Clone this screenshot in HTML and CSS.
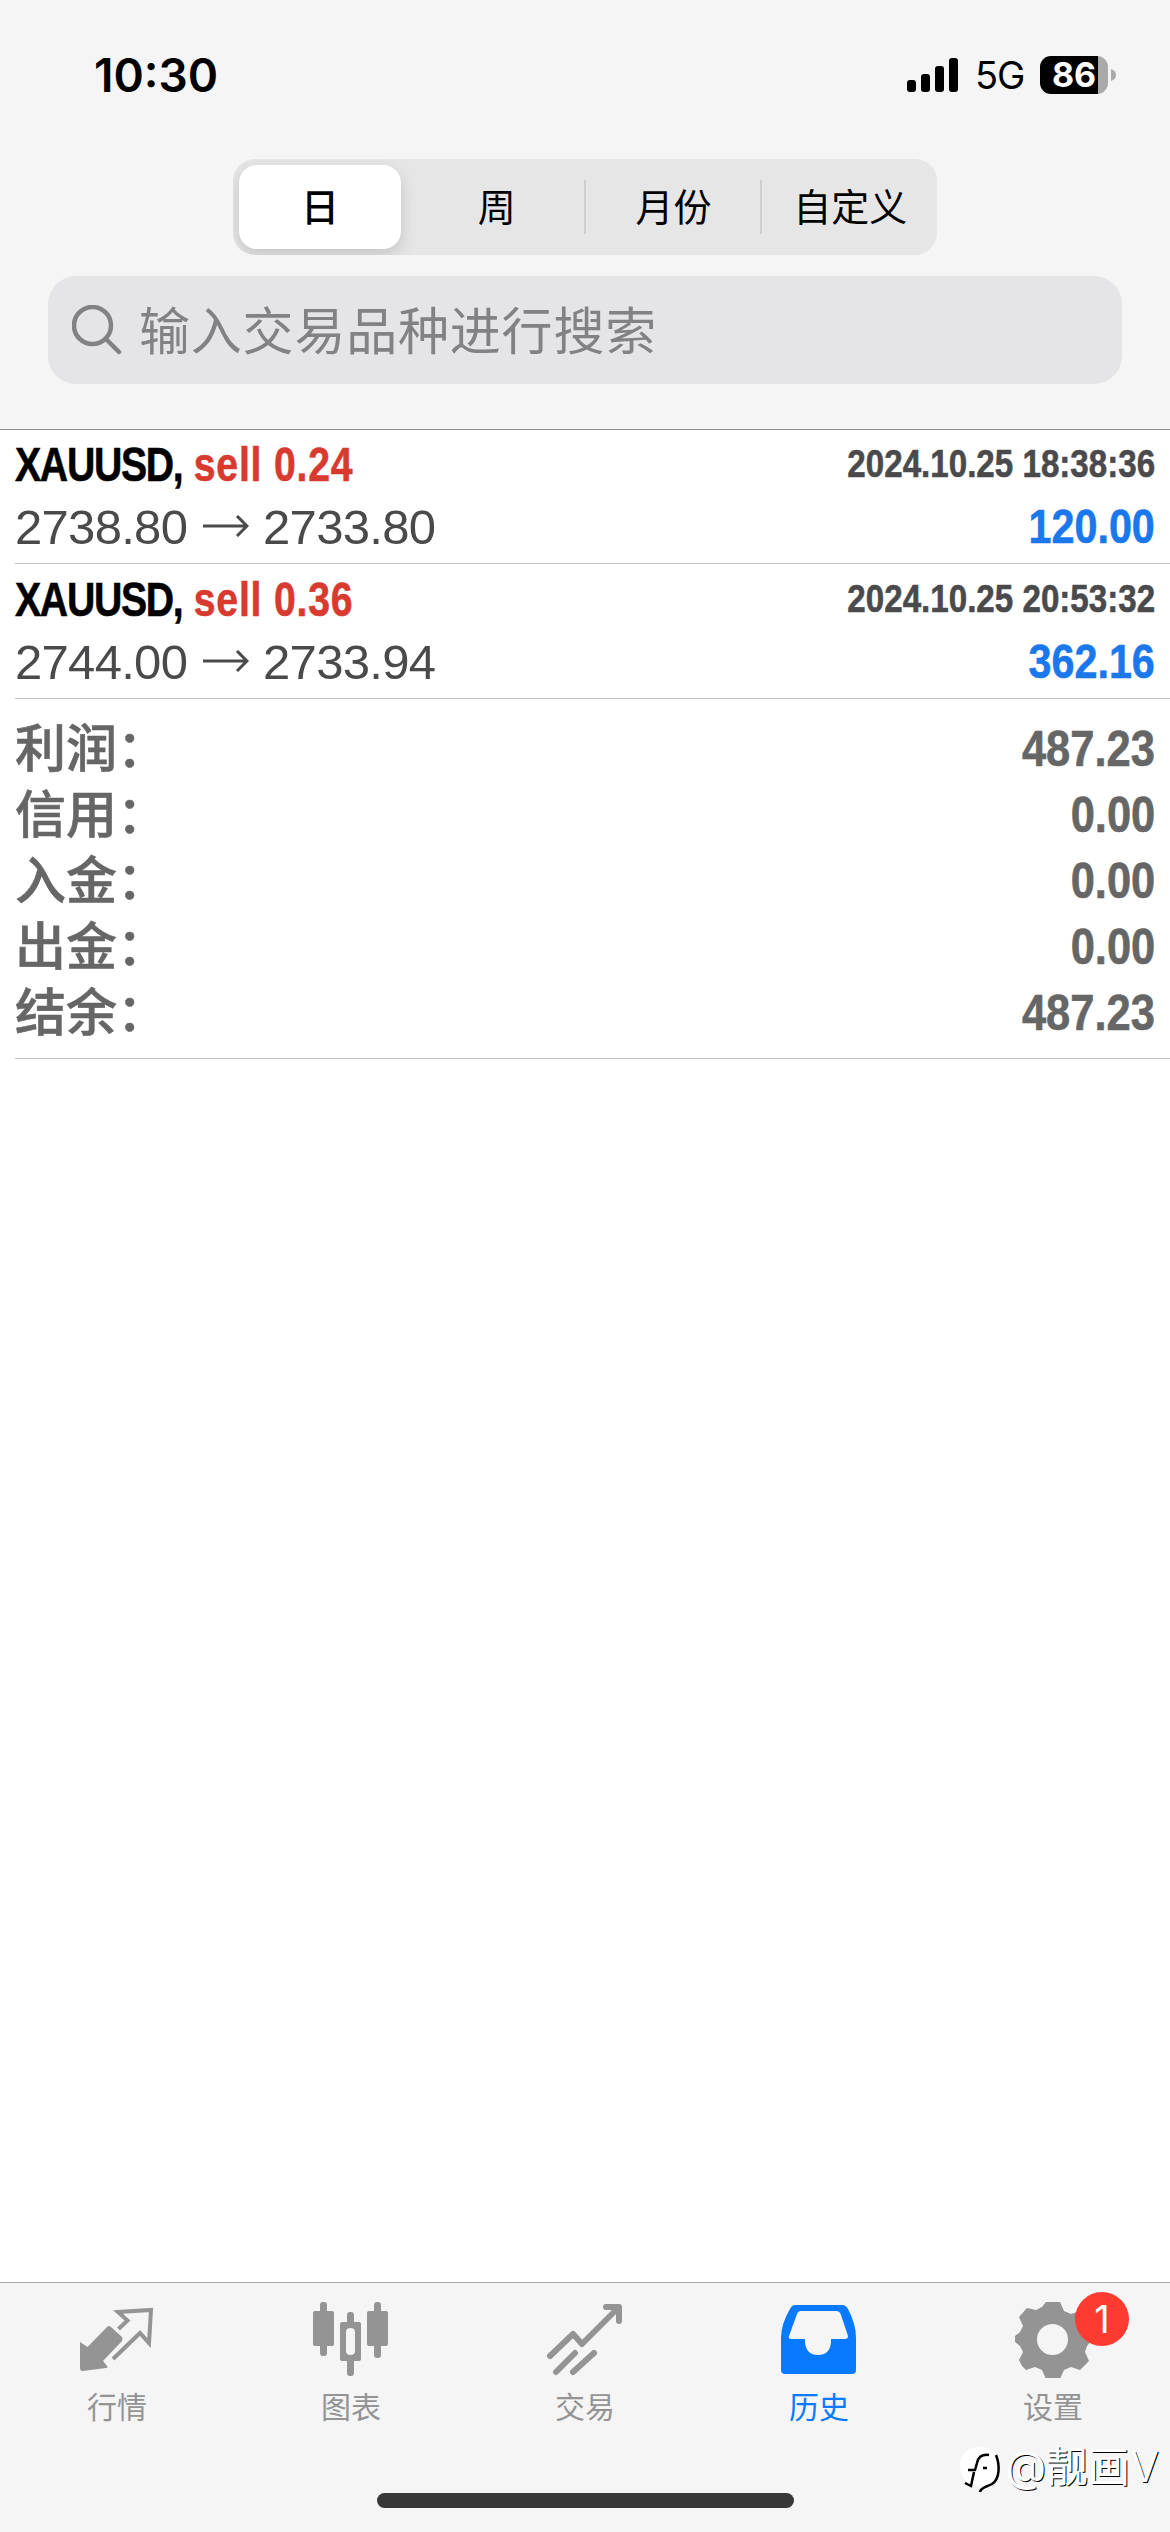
FILE: index.html
```
<!DOCTYPE html>
<html lang="zh-CN">
<head>
    <meta charset="UTF-8">
    <meta name="viewport" content="width=device-width, initial-scale=1.0">
    <title>历史</title>
    <link rel="stylesheet" href="styles.css">
</head>
<body>
    <!-- Header -->
    <header class="header">
        <div class="status-bar">
            <span class="time">10:30</span>
            <div class="status-icons">
                <svg class="signal" viewBox="0 0 51 34">
                    <rect x="0" y="22" width="9" height="12" rx="3"/>
                    <rect x="14" y="16" width="9" height="18" rx="3"/>
                    <rect x="28" y="8" width="9" height="26" rx="3"/>
                    <rect x="42" y="0" width="9" height="34" rx="3"/>
                </svg>
                <span class="network">5G</span>
                <div class="battery"><span>86</span></div>
                <svg class="battery-tip" viewBox="0 0 5 12">
                    <path d="M0 0c3 1 5 3 5 6s-2 5-5 6z"/>
                </svg>
            </div>
        </div>
        <div class="segments">
            <a href="#" class="segment active">日</a>
            <a href="#" class="segment">周</a>
            <a href="#" class="segment divided">月份</a>
            <a href="#" class="segment divided">自定义</a>
        </div>
        <div class="search">
            <svg viewBox="0 0 50 50">
                <circle cx="20.500" cy="20.500" r="18.500"/>
                <path d="M34 34l13 13"/>
            </svg>
            <span>输入交易品种进行搜索</span>
        </div>
    </header>

    <!-- History -->
    <main class="history">
        <div class="deal">
            <div class="deal-row">
                <span class="symbol">XAUUSD, <em>sell 0.24</em></span>
                <span class="date">2024.10.25 18:38:36</span>
            </div>
            <div class="deal-row">
                <span class="prices">2738.80 <svg viewBox="0 0 46 22"><path d="M0 11h44M34 1l10 10-10 10"/></svg> 2733.80</span>
                <span class="profit">120.00</span>
            </div>
        </div>
        <div class="deal">
            <div class="deal-row">
                <span class="symbol">XAUUSD, <em>sell 0.36</em></span>
                <span class="date">2024.10.25 20:53:32</span>
            </div>
            <div class="deal-row">
                <span class="prices">2744.00 <svg viewBox="0 0 46 22"><path d="M0 11h44M34 1l10 10-10 10"/></svg> 2733.94</span>
                <span class="profit">362.16</span>
            </div>
        </div>
        <div class="summary">
            <div class="summary-row"><span>利润：</span><b>487.23</b></div>
            <div class="summary-row"><span>信用：</span><b>0.00</b></div>
            <div class="summary-row"><span>入金：</span><b>0.00</b></div>
            <div class="summary-row"><span>出金：</span><b>0.00</b></div>
            <div class="summary-row"><span>结余：</span><b>487.23</b></div>
        </div>
    </main>

    <!-- Tab Bar -->
    <nav class="tab-bar">
        <a href="#" class="tab">
            <svg viewBox="0 0 76 76">
                <path d="M1 40l7.500 5L28 25q2-2 4 0l11 10q1 2 0 4L24 59l4 5q1 2-1 2L4 69q-3 0-3-3z"/>
                <path class="line" d="M39.500 27l9-8.500-9.500-8.500 33-2-2 33-9-10-27 26"/>
            </svg>
            <span>行情</span>
        </a>
        <a href="#" class="tab">
            <svg viewBox="0 0 76 76">
                <rect x="7" y="0" width="7" height="54" rx="3"/>
                <rect x="0" y="9" width="21" height="35" rx="2"/>
                <rect x="61" y="0" width="7" height="56" rx="3"/>
                <rect x="54" y="9" width="21" height="35" rx="2"/>
                <rect x="34" y="10" width="7" height="16" rx="3"/>
                <rect x="34" y="54" width="7" height="20" rx="3"/>
                <path fill-rule="evenodd" d="M29 20h17q2 0 2 2v35q0 2-2 2H29q-2 0-2-2V22q0-2 2-2zM37.500 26q-4.500 0-4.500 4v19q0 4 4.500 4t4.500-4V30q0-4-4.500-4z"/>
            </svg>
            <span>图表</span>
        </a>
        <a href="#" class="tab">
            <svg viewBox="0 0 76 76">
                <path class="thick" d="M3 54L26 32l9 10L70 7M59 5h13v14M9 70l19-19M26 70l21-19"/>
            </svg>
            <span>交易</span>
        </a>
        <a href="#" class="tab active">
            <svg viewBox="0 0 76 76">
                <path fill-rule="evenodd" d="M14 3h47q4 0 6 4 8 15 8 29v32q0 4-4 4H4q-4 0-4-4V36Q0 22 9 7q2-4 5-4zM20 9q-3 0-4 3L8 34q-1 3 2 3h14v3q1 13 13 13t13-13v-3h14q3 0 3-3L60 13q-1-4-5-4z"/>
            </svg>
            <span>历史</span>
        </a>
        <a href="#" class="tab">
            <svg viewBox="0 0 76 76">
                <path fill-rule="evenodd" d="M31 0h14l4 9 7 3 9-3 9 10-4 9 2 6 4 3v2l-4 5-2 6 4 9-9 9-9-3-7 3-4 9H31l-4-9-7-3-9 3-4-4-3-6 4-8-3-6-5-4v-6l5-4 3-6-4-9 8-9 9 2 6-3zM37.500 22a15.500 15.500 0 1 0 0 31 15.500 15.500 0 1 0 0-31z"/>
            </svg>
            <span>设置</span>
            <i class="badge">1</i>
        </a>
    </nav>
    <div class="home-indicator"></div>

    <div class="watermark">
        <svg viewBox="0 0 42 48">
            <path class="bubble" d="M20 1C9 1 1 9 1 19c0 9 4 16 11 20l9 1 1 6c11-4 18-12 18-25C40 8 32 1 20 1z"/>
            <path class="mark" d="M37 9c4 10 4 24-4 29-5 3-11 3-12 8M30 9c-8-1-11 3-12 8l-2 7H9M15 26l-3 14-6-3M24 22h4"/>
        </svg>
        <span>@靓画V</span>
    </div>
</body>
</html>
```

FILE: styles.css
```
* {
    margin: 0;
    padding: 0;
    box-sizing: border-box;
}

body {
    display: flex;
    flex-direction: column;
    height: 2532px;
    position: relative;
    overflow: hidden;
    background: #fff;
    font-family: 'Inter', 'Noto Sans CJK SC', sans-serif;
}

a {
    color: inherit;
    text-decoration: none;
}

/* Header */
.header {
    height: 430px;
    background: #f5f5f5;
    border-bottom: 1px solid #8c8c8c;
}

.status-bar {
    display: flex;
    justify-content: space-between;
    align-items: center;
    height: 149px;
    padding: 0 54px 0 94px;
}

.time {
    font-size: 46px;
    font-weight: 600;
}

.status-icons {
    display: flex;
    align-items: center;
}

.signal {
    width: 51px;
    height: 34px;
    margin-right: 17px;
}

.network {
    width: 50px;
    margin-right: 15px;
    font-size: 38px;
    letter-spacing: -1px;
}

.battery {
    width: 68px;
    height: 38px;
    border-radius: 11px;
    background: linear-gradient(to right, #000 58px, #aaa 58px);
    color: #fff;
    font-size: 34px;
    font-weight: 700;
    line-height: 38px;
    text-align: center;
}

.battery-tip {
    width: 5px;
    height: 12px;
    margin-left: 3px;
    fill: #aaa;
}

.segments {
    display: flex;
    width: 704px;
    height: 96px;
    margin: 10px auto 21px;
    padding: 6px 0 6px 6px;
    border-radius: 22px;
    background: #e6e6e6;
    font-size: 38px;
    overflow: hidden;
}

.segment {
    display: flex;
    justify-content: center;
    align-items: center;
    flex: 1;
    position: relative;
    padding-bottom: 6px;
}

.segment.active {
    flex: none;
    width: 162px;
    margin-right: 9px;
    border-radius: 18px;
    background: #fff;
    box-shadow: 0 6px 16px rgba(0, 0, 0, 0.15);
    font-weight: 500;
}

.segment.divided {
    padding-left: 3px;
}

.segment.divided::before {
    content: '';
    position: absolute;
    top: 15px;
    left: 0;
    width: 2px;
    height: 54px;
    background: #cfcfcf;
}

.search {
    display: flex;
    align-items: center;
    height: 108px;
    margin: 0 48px;
    padding: 0 24px;
    border-radius: 28px;
    background: #e5e5e7;
    color: #828284;
    font-size: 51px;
    letter-spacing: 0.800px;
}

.search span {
    padding-bottom: 4px;
}

.search svg {
    width: 50px;
    height: 50px;
    margin-right: 17px;
    fill: none;
    stroke: #828284;
    stroke-width: 4.500;
    stroke-linecap: round;
}

/* History */
.history {
    flex: 1;
    padding-left: 15px;
    font-family: 'Liberation Sans', 'Noto Sans CJK SC', sans-serif;
}

.deal {
    height: 134px;
    padding: 2px 15px 0 0;
    border-bottom: 1px solid #c4c4c4;
}

.deal + .deal {
    height: 135px;
    padding-top: 3px;
}

.deal-row {
    display: flex;
    justify-content: space-between;
    align-items: center;
    height: 63px;
    white-space: nowrap;
}

/* Condensed bold text */
.symbol,
.date,
.profit,
.summary-row b {
    font-weight: 700;
    transform-origin: right;
    -webkit-text-stroke: 0.600px currentColor;
}

.symbol {
    font-size: 49px;
    letter-spacing: -1.600px;
    transform: scaleX(0.8);
    transform-origin: left;
}

.symbol em {
    margin-left: 2px;
    color: #d93a2f;
    font-style: normal;
    letter-spacing: 1px;
}

.date {
    color: #4a4a4c;
    font-size: 39px;
    transform: scaleX(0.85);
}

.prices {
    color: #4a4a4c;
    font-size: 49px;
    letter-spacing: -0.700px;
}

.prices svg {
    width: 46px;
    height: 22px;
    margin: 0 1px 0 3px;
    vertical-align: 7px;
    fill: none;
    stroke: #4a4a4c;
    stroke-width: 3;
}

.profit {
    color: #1a78ec;
    font-size: 48px;
    transform: scaleX(0.86);
}

.summary {
    height: 360px;
    padding: 17px 15px 0 0;
    border-bottom: 1px solid #c4c4c4;
    color: #666;
}

.summary-row {
    display: flex;
    justify-content: space-between;
    height: 66px;
    font-size: 51px;
    font-weight: 500;
}

.summary-row span {
    font-family: 'Noto Sans CJK SC', sans-serif;
    line-height: 58px;
    -webkit-text-stroke: 0.600px currentColor;
}

.summary-row b {
    font-size: 50px;
    line-height: 66px;
    transform: scaleX(0.87);
}

/* Tab Bar */
.tab-bar {
    display: flex;
    height: 250px;
    border-top: 1px solid #a6a6a6;
    background: #f5f5f5;
}

.tab {
    display: flex;
    flex-direction: column;
    align-items: center;
    flex: 1;
    position: relative;
    padding-top: 19px;
    color: #949494;
    font-size: 30px;
    line-height: 44px;
}

.tab svg {
    width: 76px;
    height: 76px;
    margin-bottom: 7px;
    fill: currentColor;
}

.tab .line,
.tab .thick {
    fill: none;
    stroke: currentColor;
    stroke-width: 4;
}

.tab .thick {
    stroke-width: 6;
    stroke-linecap: round;
    stroke-linejoin: round;
}

.tab.active {
    color: #087aff;
}

.badge {
    position: absolute;
    top: 9px;
    left: 139px;
    width: 54px;
    height: 54px;
    border-radius: 50%;
    background: #fe3b30;
    color: #fff;
    font-size: 38px;
    font-style: normal;
    line-height: 54px;
    text-align: center;
}

.home-indicator {
    position: absolute;
    bottom: 24px;
    left: 377px;
    width: 417px;
    height: 15px;
    border-radius: 8px;
    background: #383838;
}

.watermark {
    position: absolute;
    right: 11px;
    bottom: 34px;
    display: flex;
    align-items: center;
    color: #fff;
    font-size: 42px;
    line-height: 52px;
    text-shadow: 1px 1px 0 #000;
}

.watermark span {
    padding-bottom: 5px;
}

.watermark svg {
    width: 42px;
    height: 48px;
    margin-right: 4px;
}

.watermark .bubble {
    fill: #fff;
}

.watermark .mark {
    fill: none;
    stroke: #000;
    stroke-width: 2.500;
}
```
